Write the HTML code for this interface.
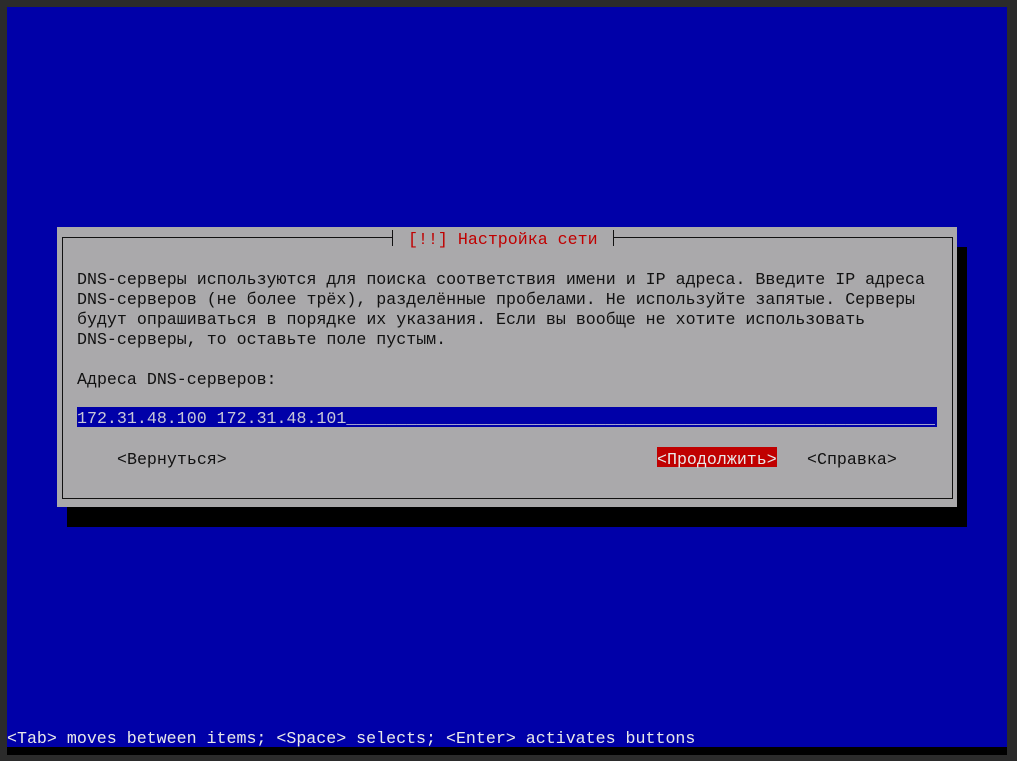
<!DOCTYPE html>
<html><head><meta charset="utf-8"><style>
body{margin:0;width:1017px;height:761px;background:#2b2b2b;position:relative;overflow:hidden;font-family:"Liberation Mono","DejaVu Sans Mono",monospace;font-size:16.64px;}
.a{position:absolute;}
.t{position:absolute;white-space:pre;line-height:20px;height:20px;color:#111;}
</style></head><body>
<div class="a" style="left:7px;top:7px;width:1000px;height:740px;background:#0000a8"></div>
<div class="a" style="left:7px;top:747px;width:1000px;height:8px;background:#000"></div>
<div class="a" style="left:67px;top:247px;width:900px;height:280px;background:#000"></div>
<div class="a" style="left:57px;top:227px;width:900px;height:280px;background:#aaa9ab"></div>
<div class="a" style="left:62px;top:237px;width:889px;height:260px;border:1px solid #111"></div>
<div class="a" style="left:392px;top:230px;width:220px;height:16px;background:#aaa9ab;border-left:1px solid #111;border-right:1px solid #111"></div>
<div class="t" style="left:408px;top:230px;color:#c00000">[!!] Настройка сети</div>
<div class="t" style="left:77px;top:270px">DNS-серверы используются для поиска соответствия имени и IP адреса. Введите IP адреса</div>
<div class="t" style="left:77px;top:290px">DNS-серверов (не более трёх), разделённые пробелами. Не используйте запятые. Серверы</div>
<div class="t" style="left:77px;top:310px">будут опрашиваться в порядке их указания. Если вы вообще не хотите использовать</div>
<div class="t" style="left:77px;top:330px">DNS-серверы, то оставьте поле пустым.</div>
<div class="t" style="left:77px;top:370px">Адреса DNS-серверов:</div>
<div class="a" style="left:77px;top:407px;width:860px;height:20px;background:#0000a8"></div>
<div class="a" style="left:77px;top:407px;width:860px;height:20px;overflow:hidden"><div class="t" style="left:0;top:2px;color:#c8c8d8">172.31.48.100 172.31.48.101___________________________________________________________</div></div>
<div class="t" style="left:117px;top:450px">&lt;Вернуться&gt;</div>
<div class="a" style="left:657px;top:447px;width:120px;height:20px;background:#c00000"></div>
<div class="t" style="left:657px;top:450px;color:#e8e8e8">&lt;Продолжить&gt;</div>
<div class="t" style="left:807px;top:450px">&lt;Справка&gt;</div>
<div class="t" style="left:7px;top:729px;color:#e8e8e8">&lt;Tab&gt; moves between items; &lt;Space&gt; selects; &lt;Enter&gt; activates buttons</div>
</body></html>
